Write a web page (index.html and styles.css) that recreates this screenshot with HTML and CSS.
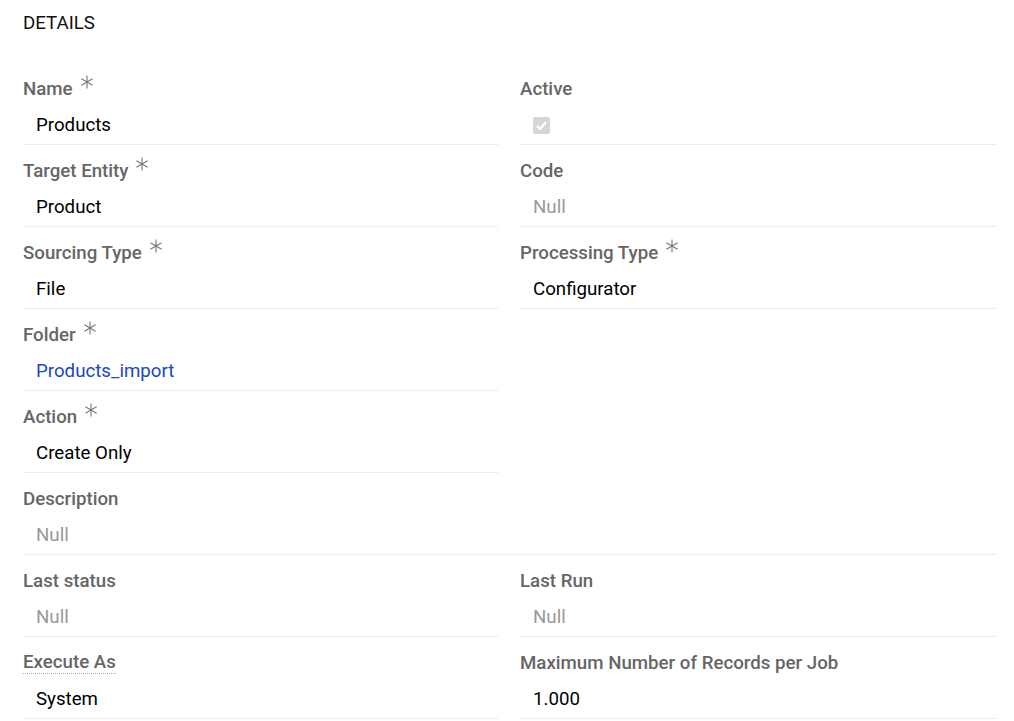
FILE: index.html
```html
<!DOCTYPE html>
<html>
<head>
<meta charset="utf-8">
<link rel="stylesheet" href="styles.css">
</head>
<body>
<div class="page">
  <div class="header">DETAILS</div>
  <div class="grid">
    <div class="field">
      <div class="label">Name<svg class="req" viewBox="0 0 14 14"><path d="M7 0.5V13.5M1.4 3.75L12.6 10.25M1.4 10.25L12.6 3.75"/></svg></div>
      <div class="value">Products</div>
    </div>
    <div class="field">
      <div class="label">Active</div>
      <div class="value"><span class="check"><svg viewBox="0 0 16 16"><path d="M3.2 8.4L6.6 11.6L12.8 4.6"/></svg></span></div>
    </div>
    <div class="field">
      <div class="label">Target Entity<svg class="req" viewBox="0 0 14 14"><path d="M7 0.5V13.5M1.4 3.75L12.6 10.25M1.4 10.25L12.6 3.75"/></svg></div>
      <div class="value">Product</div>
    </div>
    <div class="field">
      <div class="label">Code</div>
      <div class="value null">Null</div>
    </div>
    <div class="field">
      <div class="label">Sourcing Type<svg class="req" viewBox="0 0 14 14"><path d="M7 0.5V13.5M1.4 3.75L12.6 10.25M1.4 10.25L12.6 3.75"/></svg></div>
      <div class="value">File</div>
    </div>
    <div class="field">
      <div class="label">Processing Type<svg class="req" viewBox="0 0 14 14"><path d="M7 0.5V13.5M1.4 3.75L12.6 10.25M1.4 10.25L12.6 3.75"/></svg></div>
      <div class="value">Configurator</div>
    </div>
    <div class="field">
      <div class="label">Folder<svg class="req" viewBox="0 0 14 14"><path d="M7 0.5V13.5M1.4 3.75L12.6 10.25M1.4 10.25L12.6 3.75"/></svg></div>
      <div class="value"><a class="link" href="#">Products_import</a></div>
    </div>
    <div class="empty"></div>
    <div class="field">
      <div class="label">Action<svg class="req" viewBox="0 0 14 14"><path d="M7 0.5V13.5M1.4 3.75L12.6 10.25M1.4 10.25L12.6 3.75"/></svg></div>
      <div class="value">Create Only</div>
    </div>
    <div class="empty"></div>
    <div class="field full">
      <div class="label">Description</div>
      <div class="value null">Null</div>
    </div>
    <div class="field">
      <div class="label">Last status</div>
      <div class="value null">Null</div>
    </div>
    <div class="field">
      <div class="label">Last Run</div>
      <div class="value null">Null</div>
    </div>
    <div class="field">
      <div class="label"><span class="dotted">Execute As</span></div>
      <div class="value">System</div>
    </div>
    <div class="field">
      <div class="label">Maximum Number of Records per Job</div>
      <div class="value">1.000</div>
    </div>
  </div>
</div>
</body>
</html>
```

FILE: styles.css
```css
html, body {
  margin: 0;
  padding: 0;
  background: #fff;
}
body {
  font-family: Roboto, "Liberation Sans", Arial, sans-serif;
  color: #000;
}
.page {
  padding: 0 18px 0 23px;
}
.header {
  font-size: 18.7px;
  line-height: 22px;
  padding-top: 12px;
  margin-bottom: 29px;
  color: #111;
}
.grid {
  display: grid;
  grid-template-columns: 475px 476px;
  column-gap: 22px;
}
.full {
  grid-column: 1 / -1;
}
.field {
  padding: 15px 0 8px 0;
  border-bottom: 1px solid #ececec;
}
.label {
  font-size: 18.7px;
  font-weight: 500;
  line-height: 22px;
  height: 22px;
  color: #666;
  display: flex;
  align-items: flex-start;
}
.req {
  width: 14px;
  height: 14px;
  margin-left: 7px;
  margin-top: -3px;
  fill: none;
  stroke: #777;
  stroke-width: 1.1;
}
.dotted {
  border-bottom: 1px dotted #aaa;
  line-height: 21px;
}
.value {
  font-size: 18.7px;
  line-height: 22px;
  height: 22px;
  margin-top: 14px;
  padding-left: 13px;
  color: #000;
  display: flex;
  align-items: center;
}
.null {
  color: #999;
}
.link {
  color: #1a47c5;
  text-decoration: none;
}
.check {
  width: 17px;
  height: 17px;
  border-radius: 2px;
  background: #d6d6d6;
  display: inline-flex;
  align-items: center;
  justify-content: center;
}
.check svg {
  width: 15px;
  height: 15px;
  fill: none;
  stroke: #fff;
  stroke-width: 2.4;
}
```
